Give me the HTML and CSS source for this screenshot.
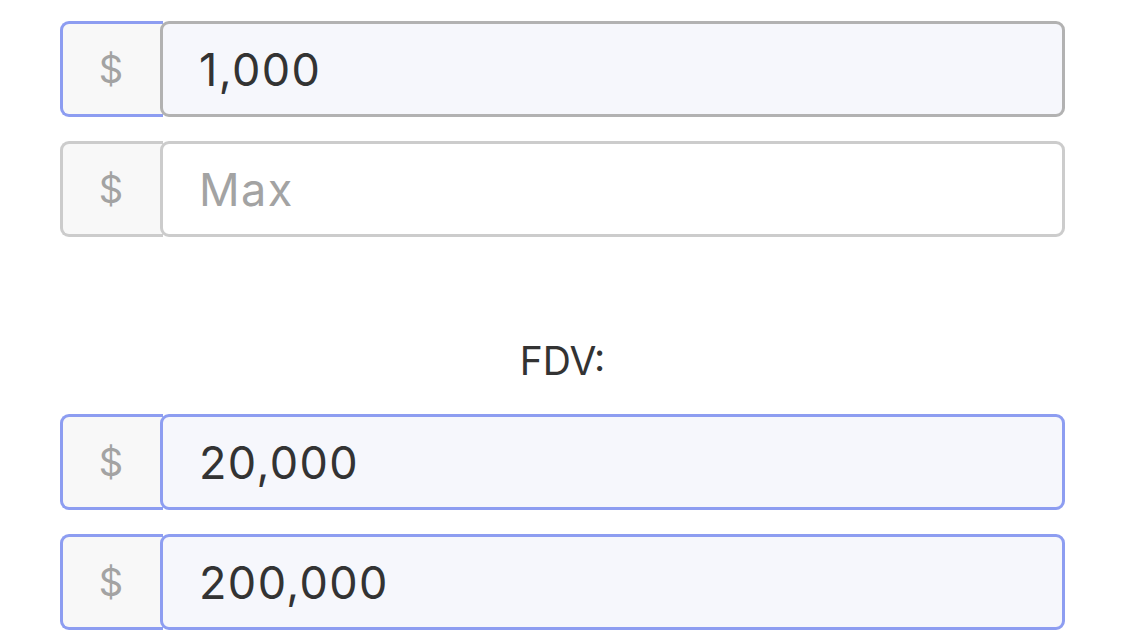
FILE: index.html
```html
<!DOCTYPE html>
<html>
<head>
<meta charset="utf-8">
<link rel="stylesheet" href="styles.css">
</head>
<body>
<div class="page">
  <div class="group">
    <div class="field field--active">
      <span class="addon">$</span>
      <input class="input input--gray" type="text" value="1,000">
    </div>
    <div class="field field--idle">
      <span class="addon">$</span>
      <input class="input input--empty" type="text" placeholder="Max">
    </div>
  </div>
  <div class="label">FDV:</div>
  <div class="group">
    <div class="field field--blue">
      <span class="addon">$</span>
      <input class="input" type="text" value="20,000">
    </div>
    <div class="field field--blue">
      <span class="addon">$</span>
      <input class="input" type="text" value="200,000">
    </div>
  </div>
</div>
</body>
</html>
```
FILE: styles.css
```css
html, body {
  margin: 0;
  padding: 0;
  background: #ffffff;
}
body {
  font-family: Inter, "Noto Sans", sans-serif;
  color: #333333;
}
.page {
  padding: 21px 60px 0 60px;
}
.group {
  display: flex;
  flex-direction: column;
  gap: 24px;
}
.field {
  display: flex;
  height: 96px;
}
.addon {
  box-sizing: border-box;
  width: 103px;
  flex: 0 0 103px;
  height: 96px;
  display: flex;
  align-items: center;
  justify-content: center;
  padding-right: 4px;
  background: #f8f8f8;
  border: 3px solid #cccccc;
  border-right: none;
  border-radius: 9px 0 0 9px;
  color: #a3a3a3;
  font-size: 38px;
}
.input {
  box-sizing: border-box;
  flex: 1;
  min-width: 0;
  height: 96px;
  margin: 0 0 0 -3px;
  position: relative;
  padding: 0 0 0 36px;
  border: 3px solid #cccccc;
  border-radius: 9px;
  background: #f6f7fc;
  font-family: Inter, "Noto Sans", sans-serif;
  font-size: 45px;
  letter-spacing: 1.4px;
  color: #333333;
  outline: none;
}
.input::placeholder {
  color: #a3a3a3;
  opacity: 1;
}
.field--active .addon {
  border-color: #8d9df1;
}
.input--gray {
  border-color: #b2b2b2;
}
.input--empty {
  background: #ffffff;
}
.field--blue .addon,
.field--blue .input {
  border-color: #8d9df1;
}
.label {
  margin: 100px 0 29px 0;
  height: 48px;
  line-height: 48px;
  text-align: center;
  font-size: 39px;
  color: #333333;
}
```
